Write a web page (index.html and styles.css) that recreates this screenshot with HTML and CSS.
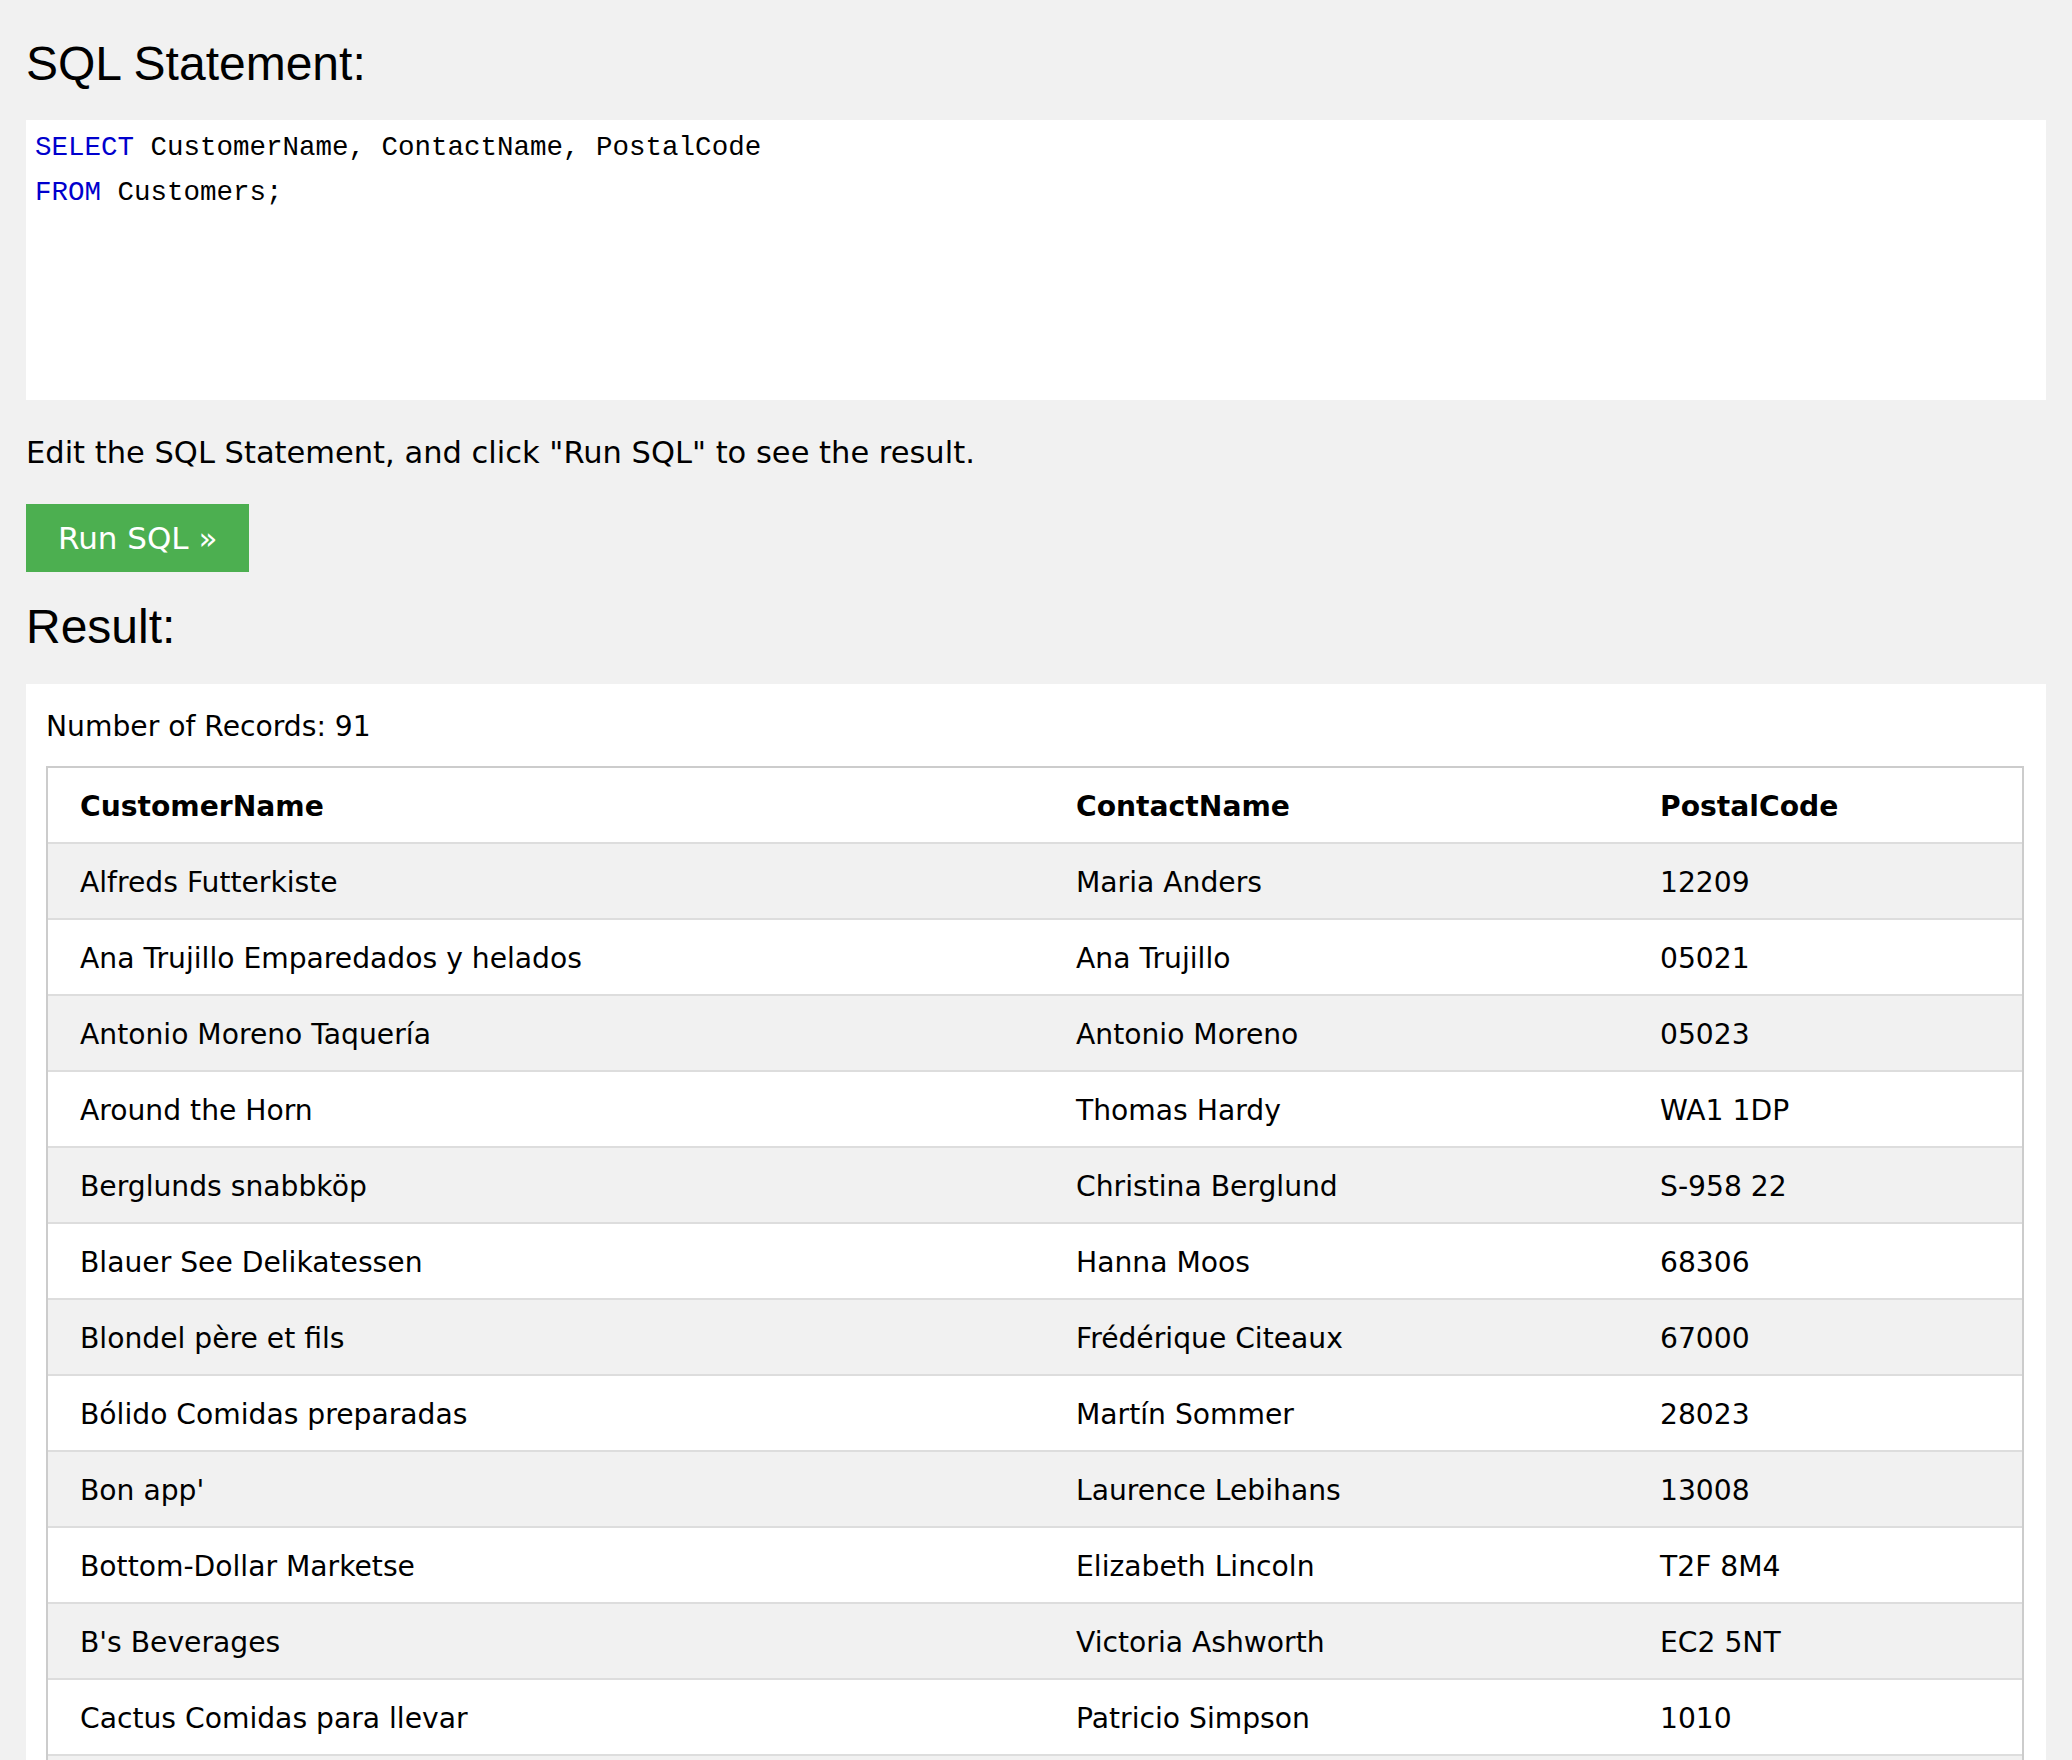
FILE: index.html
```html
<!DOCTYPE html>
<html lang="en">
<head>
<meta charset="utf-8">
<title>SQL Tryit</title>
<link rel="stylesheet" href="styles.css">
</head>
<body>
<h3 class="heading heading-sql">SQL Statement:</h3>
<div class="code-box"><div class="code-line"><span class="kw">SELECT</span> CustomerName, ContactName, PostalCode</div><div class="code-line"><span class="kw">FROM</span> Customers;</div></div>
<p class="hint">Edit the SQL Statement, and click "Run SQL" to see the result.</p>
<button class="run-btn" type="button">Run SQL »</button>
<h3 class="heading heading-result">Result:</h3>
<div class="result-box">
  <div class="records">Number of Records: 91</div>
  <table class="result-table">
    <colgroup>
      <col class="col-customer">
      <col class="col-contact">
      <col class="col-postal">
    </colgroup>
    <thead>
      <tr><th>CustomerName</th><th>ContactName</th><th>PostalCode</th></tr>
    </thead>
    <tbody>
      <tr><td>Alfreds Futterkiste</td><td>Maria Anders</td><td>12209</td></tr>
      <tr><td>Ana Trujillo Emparedados y helados</td><td>Ana Trujillo</td><td>05021</td></tr>
      <tr><td>Antonio Moreno Taquería</td><td>Antonio Moreno</td><td>05023</td></tr>
      <tr><td>Around the Horn</td><td>Thomas Hardy</td><td>WA1 1DP</td></tr>
      <tr><td>Berglunds snabbköp</td><td>Christina Berglund</td><td>S-958 22</td></tr>
      <tr><td>Blauer See Delikatessen</td><td>Hanna Moos</td><td>68306</td></tr>
      <tr><td>Blondel père et fils</td><td>Frédérique Citeaux</td><td>67000</td></tr>
      <tr><td>Bólido Comidas preparadas</td><td>Martín Sommer</td><td>28023</td></tr>
      <tr><td>Bon app'</td><td>Laurence Lebihans</td><td>13008</td></tr>
      <tr><td>Bottom-Dollar Marketse</td><td>Elizabeth Lincoln</td><td>T2F 8M4</td></tr>
      <tr><td>B's Beverages</td><td>Victoria Ashworth</td><td>EC2 5NT</td></tr>
      <tr><td>Cactus Comidas para llevar</td><td>Patricio Simpson</td><td>1010</td></tr>
      <tr><td>Centro comercial Moctezuma</td><td>Francisco Chang</td><td>05022</td></tr>
      <tr><td>Chop-suey Chinese</td><td>Yang Wang</td><td>3012</td></tr>
      <tr><td>Comércio Mineiro</td><td>Pedro Afonso</td><td>05432-043</td></tr>
    </tbody>
  </table>
</div>
</body>
</html>
```
FILE: styles.css
```css
html, body {
  margin: 0;
  padding: 0;
}
body {
  background: #f1f1f1;
  color: #000;
  font-family: "DejaVu Sans", Verdana, sans-serif;
  font-size: 28.2px;
  padding: 0 26px 40px 26px;
}
.heading {
  font-family: "Liberation Sans", Arial, sans-serif;
  font-weight: normal;
  font-size: 48px;
  line-height: 56px;
  margin: 0;
}
.heading-sql {
  padding-top: 36px;
}
.code-box {
  margin-top: 28px;
  background: #fff;
  height: 280px;
  box-sizing: border-box;
  padding: 6px 9px;
  font-family: "Liberation Mono", Consolas, monospace;
  font-size: 27.5px;
  line-height: 44.5px;
  white-space: pre;
}
.kw {
  color: #0000cd;
}
.hint {
  margin: 32px 0 0 0;
  font-size: 30.5px;
  line-height: 42px;
}
.run-btn {
  display: block;
  margin-top: 30px;
  border: none;
  background: #4caf50;
  color: #fff;
  font-family: "DejaVu Sans", Verdana, sans-serif;
  font-size: 31px;
  height: 68px;
  line-height: 68px;
  padding: 0 32px;
}
.heading-result {
  margin-top: 27px;
}
.result-box {
  margin-top: 29px;
  background: #fff;
  padding: 22px 22px 0 20px;
}
.records {
  line-height: 42px;
}
.result-table {
  margin-top: 18px;
  width: 100%;
  table-layout: fixed;
  border-collapse: separate;
  border-spacing: 0;
  border: 2px solid #ccc;
}
.col-customer { width: 996px; }
.col-contact { width: 584px; }
.col-postal { width: 394px; }
.result-table th,
.result-table td {
  text-align: left;
  padding: 18px 8px 14px 32px;
  line-height: 42px;
  border-bottom: 2px solid #ddd;
  white-space: nowrap;
}
.result-table th {
  font-weight: bold;
}
.result-table tbody tr:nth-child(odd) {
  background: #f1f1f1;
}
```
